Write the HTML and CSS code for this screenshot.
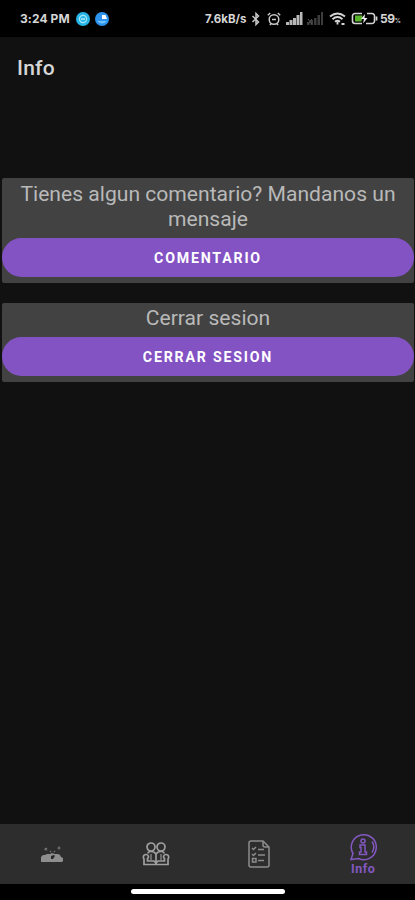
FILE: index.html
```html
<!DOCTYPE html>
<html lang="es">
<head>
    <meta charset="UTF-8">
    <meta name="viewport" content="width=device-width, initial-scale=1.0">
    <title>Info</title>
    <link rel="stylesheet" href="styles.css">
</head>
<body>
    <!-- Status bar -->
    <div class="status-bar">
        <span class="time">3:24 PM</span>
        <svg class="app-dot" width="14" height="14" viewBox="0 0 14 14">
            <circle cx="7" cy="7" r="7" fill="#27b5e8"/>
            <circle cx="7" cy="7" r="3.6" fill="none" stroke="#a5e8fa" stroke-width="1.2"/>
            <path d="M5 7h4" stroke="#d5f5ff" stroke-width="1.2"/>
        </svg>
        <svg class="app-dot" width="14" height="14" viewBox="0 0 14 14">
            <circle cx="7" cy="7" r="7" fill="#2d93ee"/>
            <path d="M2 9q5 5 10 0z" fill="#6fc0fb"/>
            <path d="M7 3h3.500l1.500 4H7z" fill="#fff"/>
        </svg>
        <span class="speed">7.6kB/s</span>
        <svg class="bluetooth" width="10" height="14" viewBox="0 0 10 14">
            <path d="M1.500 4l6 6L5 12.500v-11L7.500 4l-6 6" fill="none" stroke="#c8c8c8" stroke-width="1.500"/>
        </svg>
        <svg class="alarm" width="14" height="14" viewBox="0 0 14 14" fill="none" stroke="#c8c8c8" stroke-width="1.500">
            <circle cx="7" cy="7.500" r="4.800"/>
            <path d="M.8 3.200L3.200 1M13.200 3.200L10.800 1M5 7.500h4M3 13l1-1.500M11 13l-1-1.500"/>
        </svg>
        <svg class="signal" width="17" height="13" viewBox="0 0 17 13" fill="#b8b8b8">
            <path d="M0 10h3v3H0zM3.500 8h3v5h-3zM7 6h3v7H7zM10.500 3h3v10h-3zM14 0h2.500v13H14z"/>
        </svg>
        <svg class="signal-off" width="17" height="13" viewBox="0 0 17 13" fill="#3c3c3c">
            <path d="M0 10h2.500v3H0zM3.500 8H6v5H3.500zM7 6h2.500v7H7zM10.500 3H13v10h-2.500zM14 0h2v13h-2z"/>
            <path d="M1 7l4 5M5 7l-4 5" stroke="#555"/>
        </svg>
        <svg class="wifi" width="17" height="14" viewBox="0 0 17 14" fill="none" stroke="#d5d5d5" stroke-width="1.900">
            <path d="M1 4.500Q8.500-1.500 16 4.500M3.500 7.200Q8.500 3 13.500 7.200M6 9.800q2.500-2 5 0"/>
            <path d="M8.500 9.500v3M12.500 12h3"/>
        </svg>
        <svg class="battery" width="27" height="13" viewBox="0 0 27 13">
            <path d="M11 1.500H4A2.500 2.500 0 0 0 1.500 4v5A2.500 2.500 0 0 0 4 11.500h7M16 1.500h5A2.500 2.500 0 0 1 23.500 4v5a2.500 2.500 0 0 1-2.500 2.500h-6" fill="none" stroke="#d5d5d5" stroke-width="1.600"/>
            <path d="M4 3.500h7.500l-1 6H4z" fill="#58b52b"/>
            <path d="M14 2l-4 5h3l-1 4.500L16.500 6h-3z" fill="#eee"/>
            <path d="M25.500 4.500v4" stroke="#d5d5d5" stroke-width="1.800"/>
        </svg>
        <span class="percent">59<small>%</small></span>
    </div>

    <header class="toolbar">
        <h1>Info</h1>
    </header>

    <main>
        <section class="card">
            <p>Tienes algun comentario? Mandanos un mensaje</p>
            <button type="button">COMENTARIO</button>
        </section>
        <section class="card card-session">
            <p>Cerrar sesion</p>
            <button type="button">CERRAR SESION</button>
        </section>
    </main>

    <!-- Bottom navigation -->
    <nav>
        <a class="tab">
            <svg width="26" height="20" viewBox="0 0 26 20">
                <path d="M2 18v-5l2-2h2l2-1h3l2-1 3 1h3l2 1 1 2 2 1v3l-1 1z" fill="#8e8e8e"/>
                <path d="M12 15v-3l3-1 1 1-2 3z" fill="#292929"/>
                <path d="M6 4l2 2.500M8 4L5.500 6M20 2.500v3M18.500 4h3M11 8l1-1M16 8l-1-1" stroke="#777" stroke-width="1.200"/>
            </svg>
        </a>
        <a class="tab">
            <svg width="28" height="26" viewBox="0 0 28 26" fill="none" stroke="#a0a0a0" stroke-width="1.700">
                <circle cx="9" cy="6" r="4"/>
                <circle cx="19" cy="6" r="4"/>
                <path d="M6 12.500q0-2 3-2 3.500 0 5 2.500 1.500-2.500 5-2.500 3 0 3 2M14 13v10"/>
                <path d="M9 13v6M19 13v6" stroke="#777"/>
                <path d="M2 23.500V18q-1-1-.5-3 .5-1.500 2.500-1.500t2.500 2q0 1.500-1 2V20H12l2 2 2-2h6.500v-2.500q-1-.5-1-2 .5-2 2.500-2t2.500 1.500q.5 2-.5 3v5.500z"/>
            </svg>
        </a>
        <a class="tab">
            <svg width="22" height="28" viewBox="0 0 22 28" fill="none" stroke="#8c8c8c" stroke-width="1.500">
                <path d="M3 1h12l6 6v18q0 2-2 2H3q-2 0-2-2V3q0-2 2-2zM15 1v4q0 2 2 2h4"/>
                <path d="M4 8l1.500 1.500L8 7M4 14l1.500 1.500L8 13M4.500 18.500h3.500V22H4.500zM10 9.500h6M10 15h7M10 20.500h6"/>
            </svg>
        </a>
        <a class="tab active">
            <svg width="28" height="28" viewBox="0 0 28 28" fill="none" stroke="#8358c0" stroke-width="1.500">
                <path d="M2 26.500l2-6A12.500 12.500 0 1 1 9.500 25.500z"/>
                <path d="M23 8.500a10 10 0 0 1 0 11"/>
                <circle cx="14" cy="8" r="2"/>
                <path d="M11 12h5v7h1.500v2.500h-7V19H12v-4.500h-1z"/>
            </svg>
            <span>Info</span>
        </a>
    </nav>

    <div class="gesture-bar"><div class="handle"></div></div>
</body>
</html>
```

FILE: styles.css
```css
* {
    box-sizing: border-box;
}
body {
    display: flex;
    flex-direction: column;
    height: 900px;
    margin: 0;
    background-color: #111;
    color: #d6d6d6;
    font-family: Roboto, sans-serif;
}
svg {
    display: block;
    flex: none;
}
.status-bar {
    display: flex;
    align-items: center;
    height: 37px;
    padding-left: 20px;
    background: #000;
    font-family: Inter, sans-serif;
    font-size: 12px;
    font-weight: 700;
    white-space: nowrap;
}
.time {
    width: 51px;
    margin-right: 5px;
    letter-spacing: 0.1px;
}
.app-dot {
    margin-right: 5px;
}
.speed {
    width: 44px;
    margin-left: 91px;
    font-size: 11.5px;
}
.bluetooth {
    margin-left: 2px;
}
.alarm {
    margin-left: 6px;
}
.signal {
    margin-left: 5px;
}
.signal-off {
    margin-left: 4px;
}
.wifi {
    margin-left: 5px;
}
.battery {
    margin-left: 5px;
}
.percent {
    margin-left: 2px;
    letter-spacing: -0.4px;
}
.percent small {
    font-size: 6px;
}
.toolbar {
    height: 141px;
    padding: 18px 17px;
}
.toolbar h1 {
    margin: 0;
    font-size: 21px;
    font-weight: 500;
    line-height: 27px;
    letter-spacing: 0.2px;
}
main {
    flex: 1;
    padding: 0 1px 0 2px;
}
.card {
    height: 105px;
    margin-bottom: 20px;
    padding-top: 4px;
    background: #424242;
    border-radius: 2px;
    text-align: center;
}
.card-session {
    height: 79px;
    padding-top: 3px;
}
.card p {
    margin: 0 10px 7px;
    color: #b9b9b9;
    font-size: 21.1px;
    line-height: 24.5px;
}
.card-session p {
    margin-bottom: 6.5px;
}
.card button {
    display: block;
    width: 100%;
    height: 39px;
    padding: 0;
    border: none;
    border-radius: 20px;
    background: #8353c4;
    color: #fff;
    font-family: inherit;
    font-size: 14.2px;
    font-weight: 700;
    letter-spacing: 1.8px;
}
nav {
    display: grid;
    grid-template-columns: repeat(4, 1fr);
    height: 60px;
    background: #2d2d2d;
}
.tab {
    display: flex;
    flex-direction: column;
    align-items: center;
    justify-content: center;
}
.active {
    color: #8358c0;
    font-size: 12.5px;
    font-weight: 700;
    line-height: 15px;
    letter-spacing: 0.5px;
}
.gesture-bar {
    height: 16px;
    padding-top: 5px;
    background: #000;
}
.handle {
    width: 154px;
    height: 5px;
    margin: 0 auto;
    border-radius: 3px;
    background: #fff;
}
```
